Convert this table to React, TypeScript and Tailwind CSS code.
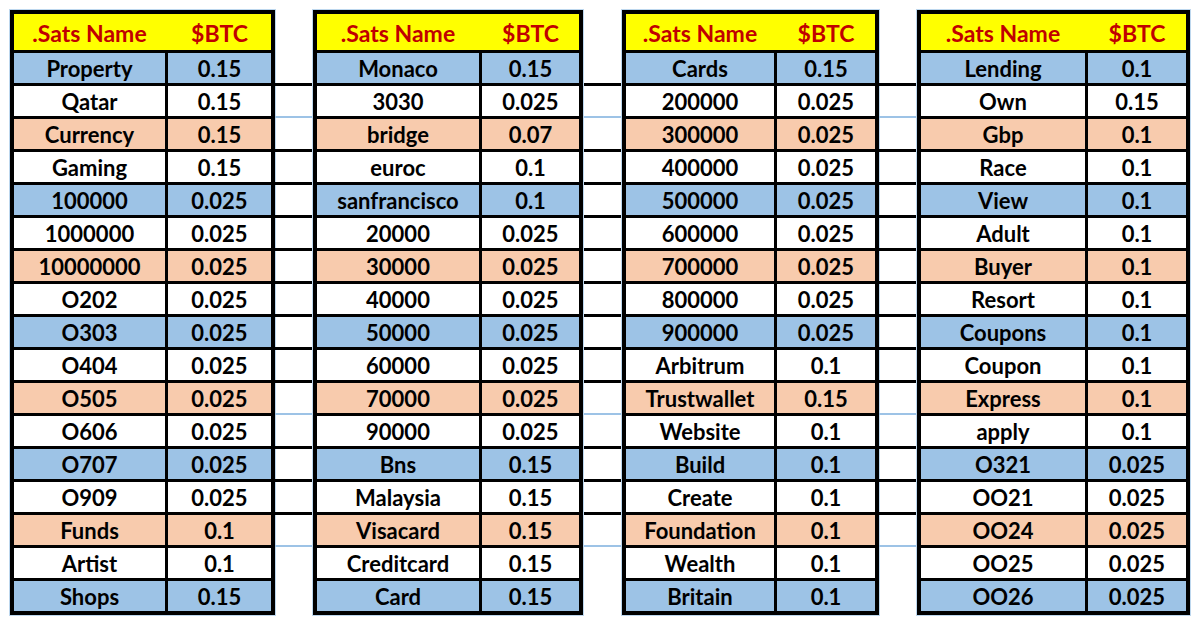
type Row = [string, string]

const tables: { nameW: string; valW: string; rows: Row[] }[] = [
  {
    nameW: 'w-[154px]',
    valW: 'w-[103px]',
    rows: [
      ['Property', '0.15'], ['Qatar', '0.15'], ['Currency', '0.15'], ['Gaming', '0.15'],
      ['100000', '0.025'], ['1000000', '0.025'], ['10000000', '0.025'], ['O202', '0.025'],
      ['O303', '0.025'], ['O404', '0.025'], ['O505', '0.025'], ['O606', '0.025'],
      ['O707', '0.025'], ['O909', '0.025'], ['Funds', '0.1'], ['Artist', '0.1'], ['Shops', '0.15'],
    ],
  },
  {
    nameW: 'w-[165px]',
    valW: 'w-[97px]',
    rows: [
      ['Monaco', '0.15'], ['3030', '0.025'], ['bridge', '0.07'], ['euroc', '0.1'],
      ['sanfrancisco', '0.1'], ['20000', '0.025'], ['30000', '0.025'], ['40000', '0.025'],
      ['50000', '0.025'], ['60000', '0.025'], ['70000', '0.025'], ['90000', '0.025'],
      ['Bns', '0.15'], ['Malaysia', '0.15'], ['Visacard', '0.15'], ['Creditcard', '0.15'], ['Card', '0.15'],
    ],
  },
  {
    nameW: 'w-[151px]',
    valW: 'w-[98px]',
    rows: [
      ['Cards', '0.15'], ['200000', '0.025'], ['300000', '0.025'], ['400000', '0.025'],
      ['500000', '0.025'], ['600000', '0.025'], ['700000', '0.025'], ['800000', '0.025'],
      ['900000', '0.025'], ['Arbitrum', '0.1'], ['Trustwallet', '0.15'], ['Website', '0.1'],
      ['Build', '0.1'], ['Create', '0.1'], ['Foundation', '0.1'], ['Wealth', '0.1'], ['Britain', '0.1'],
    ],
  },
  {
    nameW: 'w-[167px]',
    valW: 'w-[98px]',
    rows: [
      ['Lending', '0.1'], ['Own', '0.15'], ['Gbp', '0.1'], ['Race', '0.1'],
      ['View', '0.1'], ['Adult', '0.1'], ['Buyer', '0.1'], ['Resort', '0.1'],
      ['Coupons', '0.1'], ['Coupon', '0.1'], ['Express', '0.1'], ['apply', '0.1'],
      ['O321', '0.025'], ['OO21', '0.025'], ['OO24', '0.025'], ['OO25', '0.025'], ['OO26', '0.025'],
    ],
  },
]

// blue, white, peach, white
const rowBg = ['bg-[#9dc3e6]', 'bg-white', 'bg-[#f8cbad]', 'bg-white']

// excel gridlines left over between the tables
const blueLines = [2, 11, 15]

function SatsTable({ nameW, valW, rows }: { nameW: string; valW: string; rows: Row[] }) {
  return (
    <div className="border-[4px] border-black shadow-[0_0_0_1px_#bdd7ee]">
      <div className="flex h-[39px] bg-[#ffff00] border-b-[3px] border-black text-[#c00000] text-[23px] font-bold">
        <div className={`${nameW} flex items-center justify-center pt-[2px] pr-[3px]`}>.Sats Name</div>
        <div className={`${valW} flex items-center justify-center pt-[2px]`}>$BTC</div>
      </div>
      {rows.map(([name, btc], i) => (
        <div
          key={name}
          className={`flex ${i === rows.length - 1 ? 'h-[30px]' : 'h-[33px] border-b-[3px] border-black'} ${rowBg[i % 4]} text-black text-[22px] font-bold`}
        >
          <div className={`${nameW} flex items-center justify-center pt-[2px] border-r-[3px] border-black`}>{name}</div>
          <div className={`${valW} flex items-center justify-center pt-[2px]`}>{btc}</div>
        </div>
      ))}
    </div>
  )
}

function GapColumn() {
  return (
    <div className="w-[38px] flex flex-col pt-[73px]">
      {Array.from({ length: 15 }, (_, i) => i + 1).map(k => (
        <div
          key={k}
          className={blueLines.includes(k) ? 'h-[33px] border-t-[2px] border-[#9dc3e6]' : 'h-[33px] border-t-[3px] border-black'}
        />
      ))}
    </div>
  )
}

export default function App() {
  return (
    <div className="w-[1200px] h-[629px] bg-white pt-[10px] pl-[10px] font-['Lato','Open_Sans',sans-serif] leading-none">
      <div className="flex items-start">
        <SatsTable {...tables[0]} />
        <GapColumn />
        <SatsTable {...tables[1]} />
        <div className="w-[1px]" />
        <GapColumn />
        <SatsTable {...tables[2]} />
        <GapColumn />
        <SatsTable {...tables[3]} />
      </div>
    </div>
  )
}
